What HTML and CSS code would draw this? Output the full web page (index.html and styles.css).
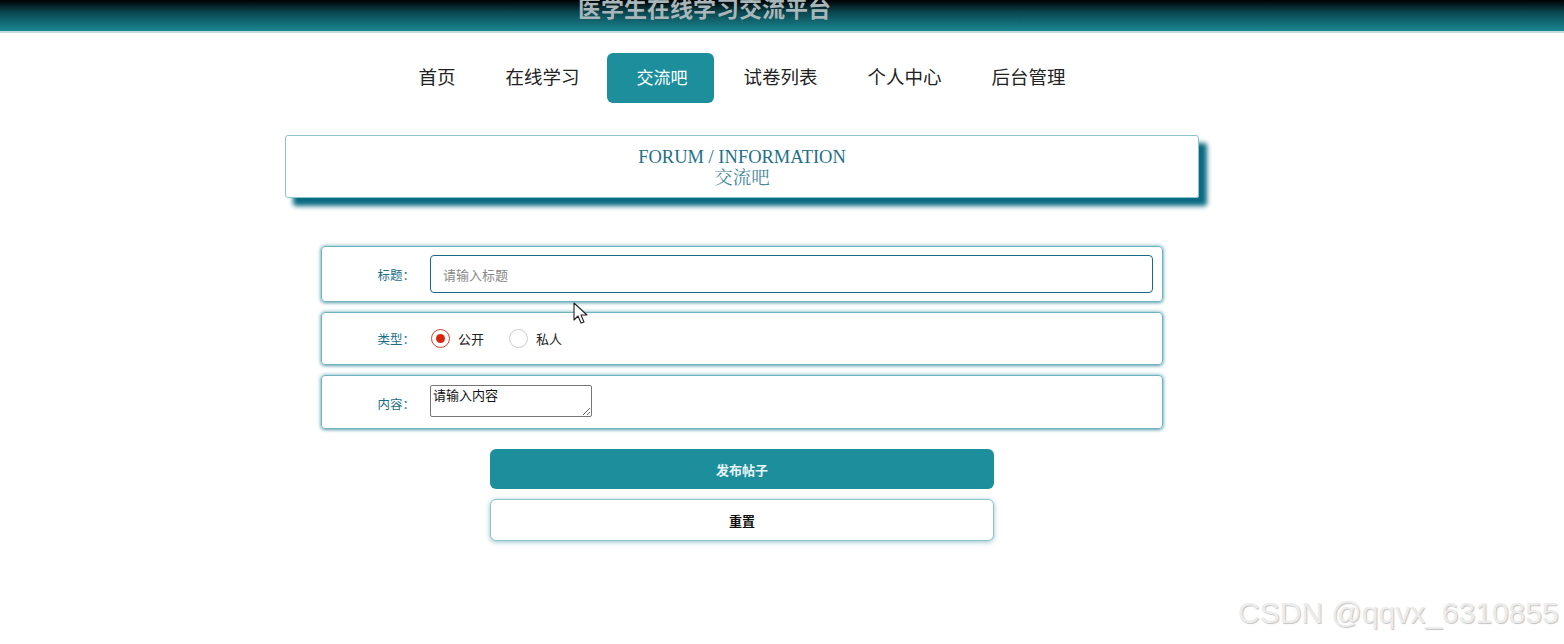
FILE: index.html
```html
<!DOCTYPE html>
<html lang="zh">
<head>
<meta charset="utf-8">
<title>交流吧</title>
<link rel="stylesheet" href="styles.css">
</head>
<body>
<header class="topbar">
  <div class="site-title">医学生在线学习交流平台</div>
</header>
<nav class="nav">
  <a class="nav-item">首页</a>
  <a class="nav-item">在线学习</a>
  <a class="nav-item active">交流吧</a>
  <a class="nav-item">试卷列表</a>
  <a class="nav-item">个人中心</a>
  <a class="nav-item">后台管理</a>
</nav>
<main class="main">
  <section class="banner">
    <div class="banner-en">FORUM / INFORMATION</div>
    <div class="banner-cn">交流吧</div>
  </section>
  <form class="form">
    <div class="row row-title">
      <label class="label">标题：</label>
      <input class="text-input" type="text" placeholder="请输入标题">
    </div>
    <div class="row row-type">
      <label class="label">类型：</label>
      <div class="radios">
        <span class="radio checked"></span><span class="radio-text">公开</span>
        <span class="radio"></span><span class="radio-text">私人</span>
      </div>
    </div>
    <div class="row row-content">
      <label class="label">内容：</label>
      <textarea class="textarea">请输入内容</textarea>
    </div>
    <div class="buttons">
      <button type="button" class="btn btn-primary">发布帖子</button>
      <button type="button" class="btn btn-reset">重置</button>
    </div>
  </form>
</main>
<svg class="cursor" width="16" height="24" viewBox="0 0 16 24"><path d="M1 1 L1 18 L5 14 L8 21 L11 20 L8 13 L14 13 Z" fill="#fff" stroke="#222" stroke-width="1.1" stroke-linejoin="round"/></svg>
<div class="watermark">CSDN @qqvx_6310855</div>
</body>
</html>
```
FILE: styles.css
```css
* { box-sizing: border-box; }
html, body { margin: 0; padding: 0; }
body {
  width: 1564px;
  height: 644px;
  overflow: hidden;
  position: relative;
  background: #fff;
  font-family: "Microsoft YaHei", "Noto Sans CJK SC", "Noto Sans", sans-serif;
}
.topbar {
  height: 33px;
  background: linear-gradient(to bottom, #000 0%, #0a4750 40%, #1a8791 100%);
  border-bottom: 2px solid #c3d9dc;
  overflow: hidden;
  padding-right: 155px;
  text-align: center;
}
.site-title {
  margin-top: -8px;
  font-size: 23px;
  line-height: 30px;
  font-weight: bold;
  color: #a9b6b9;
}
.nav {
  width: 1484px;
  margin-top: 20px;
  display: flex;
  justify-content: center;
}
.nav-item {
  height: 50px;
  line-height: 47px;
  padding: 0 25px;
  font-size: 18.5px;
  color: #222;
  border-radius: 6px;
}
.nav-item.active {
  background: #1d8f9c;
  color: #fff;
  padding: 0 27px 0 29px;
  font-size: 17px;
  margin: 0 4px 0 3px;
}
.main {
  width: 1484px;
  padding-top: 32px;
}
.banner {
  width: 914px;
  height: 63px;
  margin: 0 auto;
  border: 1px solid #8cc4cc;
  border-radius: 3px;
  box-shadow: 8px 8px 5px #0a6a82;
  text-align: center;
  font-family: "Liberation Serif", "Noto Serif CJK SC", "Noto Sans CJK SC", serif;
  padding-top: 11px;
}
.banner-en {
  font-size: 18.5px;
  line-height: 20px;
  color: #236f89;
}
.banner-cn {
  font-size: 18.5px;
  line-height: 22px;
  color: #4a8a9a;
}
.form {
  width: 842px;
  margin: 48px auto 0;
}
.row {
  display: flex;
  align-items: center;
  border: 1px solid #6db3c0;
  border-radius: 4px;
  box-shadow: 0 0 4px rgba(20, 125, 150, 0.55), 0 1px 3px rgba(10, 100, 125, 0.4);
  padding: 0 9px 0 0;
  margin-bottom: 10px;
}
.row-title { height: 56px; }
.row-type { height: 53px; }
.row-content { height: 54px; align-items: flex-start; padding-top: 9px; }
.label {
  width: 93px;
  margin-right: 15px;
  text-align: right;
  font-size: 12.5px;
  color: #1c6e85;
  flex: none;
}
.row-content .label { margin-top: 9px; }
.text-input {
  flex: 1;
  height: 38px;
  border: 1px solid #176a80;
  border-radius: 4px;
  padding: 0 12px;
  font-size: 13px;
  font-family: inherit;
  outline: none;
}
.text-input::placeholder { color: #888; }
.radios {
  display: flex;
  align-items: center;
  font-size: 13px;
  color: #222;
}
.radio {
  width: 19px;
  height: 19px;
  border-radius: 50%;
  border: 1px solid #ccc;
  margin-left: 1px;
  margin-right: 8px;
  display: inline-flex;
  align-items: center;
  justify-content: center;
}
.radio.checked { border-color: #d4432f; }
.radio.checked::after {
  content: "";
  width: 9px;
  height: 9px;
  border-radius: 50%;
  background: #d7260f;
}
.radio-text { margin-right: 24px; }
.textarea {
  width: 162px;
  height: 32px;
  border: 1px solid #767676;
  border-radius: 2px;
  padding: 1px 2px;
  font-size: 13px;
  font-family: inherit;
  color: #111;
  line-height: 16px;
  resize: both;
}
.buttons {
  width: 504px;
  margin: 20px auto 0;
  display: flex;
  flex-direction: column;
  gap: 10px;
}
.btn {
  font-family: inherit;
  font-size: 13px;
  font-weight: bold;
  border-radius: 6px;
  cursor: pointer;
}
.btn-primary {
  height: 40px;
  background: #1d8f9c;
  color: #eaf6f7;
  border: none;
}
.btn-reset {
  height: 42px;
  background: #fff;
  color: #111;
  border: 1px solid #8cc4cc;
  box-shadow: 0 1px 5px rgba(20, 110, 135, 0.45);
}
.cursor {
  position: absolute;
  left: 573px;
  top: 302px;
}
.watermark {
  position: absolute;
  left: 1238px;
  top: 596px;
  font-family: "Liberation Sans", sans-serif;
  font-size: 30px;
  color: #ececec;
  text-shadow: 1px 1px 1px #c4c4c4;
}
```
